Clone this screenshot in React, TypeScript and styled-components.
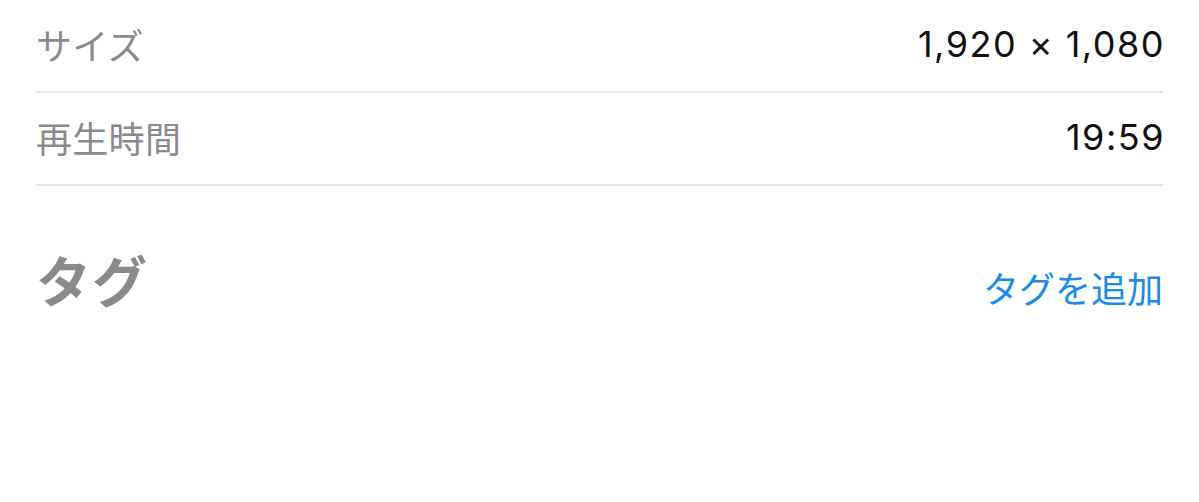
import React from "react";
import styled, { createGlobalStyle } from "styled-components";

const Global = createGlobalStyle`
  html, body { margin: 0; padding: 0; background: #ffffff; }
  body { font-family: "Inter", "Noto Sans CJK JP", sans-serif; -webkit-font-smoothing: antialiased; }
`;

const Page = styled.div`
  padding: 0 36px;
  display: flex;
  flex-direction: column;
`;

const Row = styled.div`
  display: flex;
  align-items: center;
  justify-content: space-between;
  box-sizing: border-box;
  height: 93px;
  padding-bottom: 3px;
  border-bottom: 2px solid #e5e5e7;
`;

const Label = styled.span`
  font-family: "Noto Sans CJK JP", sans-serif;
  font-size: 36px;
  font-weight: 400;
  color: #8a8a8e;
  letter-spacing: 0.3px;
`;

const Value = styled.span`
  font-family: "Inter", "Noto Sans CJK JP", sans-serif;
  font-size: 36px;
  color: #111111;
  letter-spacing: 1.5px;
  margin-right: -2px;
`;

const SectionHeader = styled.div`
  display: flex;
  align-items: center;
  justify-content: space-between;
  margin-top: 57px;
`;

const Heading = styled.h2`
  margin: 0;
  font-family: "Noto Sans CJK JP", sans-serif;
  font-weight: 700;
  font-size: 55px;
  color: #8a8a8e;
  line-height: 1.3;
  letter-spacing: 1px;
`;

const LinkButton = styled.button`
  border: none;
  background: none;
  padding: 0;
  margin-top: 16px;
  font-family: "Noto Sans CJK JP", sans-serif;
  font-size: 36px;
  color: #1a8ae8;
  cursor: pointer;
`;

export default function App() {
  return (
    <>
      <Global />
      <Page>
        <Row>
          <Label>サイズ</Label>
          <Value>1,920 × 1,080</Value>
        </Row>
        <Row>
          <Label>再生時間</Label>
          <Value>19:59</Value>
        </Row>
        <SectionHeader>
          <Heading>タグ</Heading>
          <LinkButton>タグを追加</LinkButton>
        </SectionHeader>
      </Page>
    </>
  );
}
